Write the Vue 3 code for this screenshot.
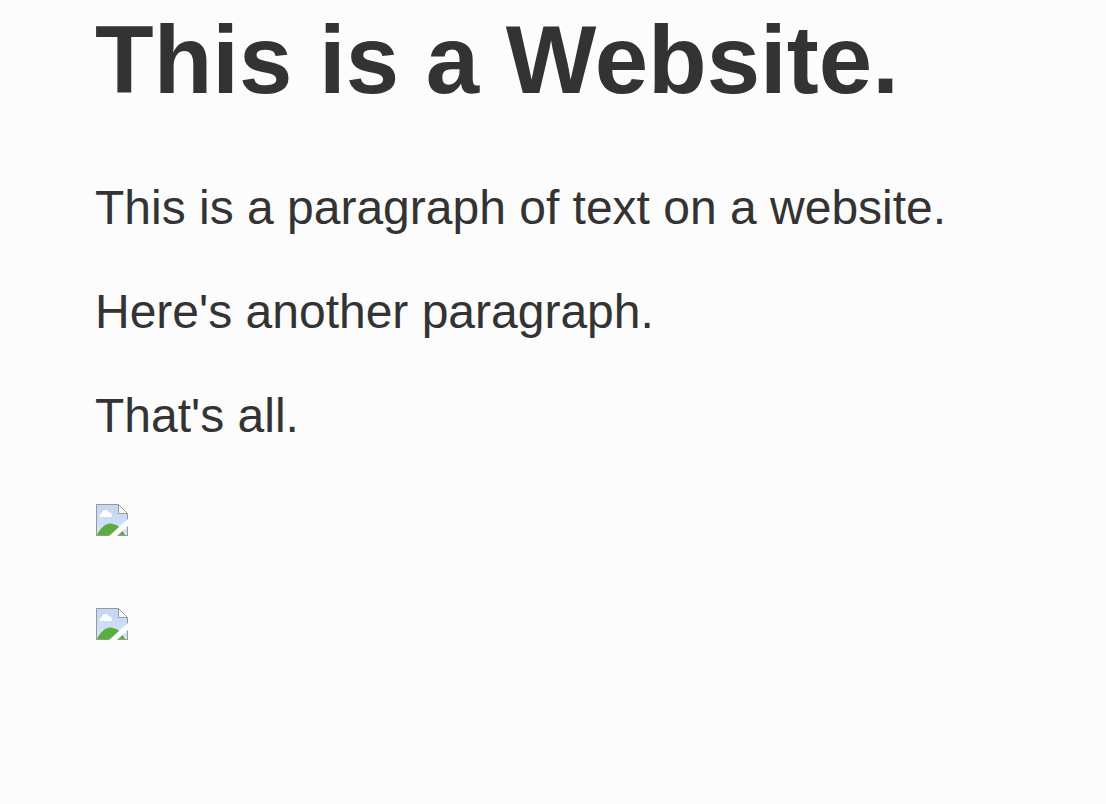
<script setup>
const paragraphs = [
  'This is a paragraph of text on a website.',
  "Here's another paragraph.",
  "That's all."
]
const pictures = [1, 2]
</script>

<template>
  <main class="page">
    <h1 class="title">This is a Website.</h1>
    <p v-for="text in paragraphs" :key="text" class="row">{{ text }}</p>
    <p v-for="n in pictures" :key="n" class="row picture">
      <svg class="icon" viewBox="0 0 32 32" aria-hidden="true">
        <defs>
          <linearGradient :id="`sky-${n}`" x1="0" y1="0" x2="0" y2="1">
            <stop offset="0" stop-color="#c3d6f5" />
            <stop offset="1" stop-color="#d6e4fa" />
          </linearGradient>
        </defs>
        <path d="M0 0H22L32 10V32H0Z" :fill="`url(#sky-${n})`" />
        <path d="M5 13C3 13 3 10 6 9.500C6 5 12 5 13 8.500C16 8 17 13 15 13Z" fill="#fff" />
        <path d="M1 31C3 26 9 19 15 19.500C22 20 26 25 29 31Z" fill="#5bad42" />
        <path d="M.5 32V.5H22L31.500 10V32M0 31.500H32" fill="none" stroke="#999" />
        <path d="M22.500 .5V9.500H31.500Z" fill="#fafafa" stroke="#999" />
        <path d="M13 32L32 15V22L21 32Z" fill="#fcfcfc" />
      </svg>
    </p>
  </main>
</template>

<style scoped>
.page {
  padding: 4px 95px 104px;
  color: #333;
  font-family: "Liberation Sans", Arial, sans-serif;
}
.title {
  margin: 0 0 64px;
  font-size: 96px;
  line-height: 112px;
  font-weight: 700;
}
.row {
  margin: 0 0 48px;
  font-size: 48px;
  line-height: 56px;
}
.picture {
  display: flex;
  align-items: center;
  min-height: 56px;
  padding-left: 1px;
}
.icon {
  width: 32px;
  height: 32px;
}
</style>

<style>
body {
  background: #fcfcfc;
}
</style>
